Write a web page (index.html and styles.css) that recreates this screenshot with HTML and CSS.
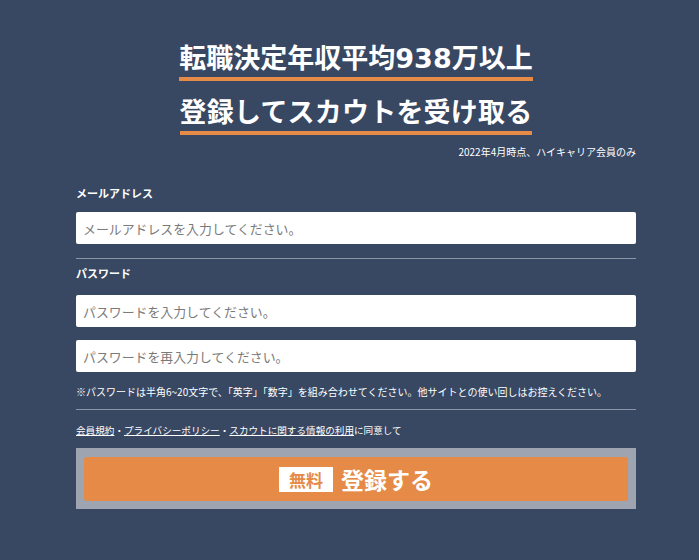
FILE: index.html
```html
<!DOCTYPE html>
<html lang="ja">
<head>
<meta charset="utf-8">
<title>登録</title>
<link rel="stylesheet" href="styles.css">
</head>
<body>
<div class="wrap">
  <div class="headline">
    <span class="hl">転職決定年収平均<span class="num">938</span>万以上</span>
    <span class="hl hl-2">登録してスカウトを受け取る</span>
  </div>
  <p class="note">2022年4月時点、ハイキャリア会員のみ</p>
  <form class="form">
    <label class="label label-mail">メールアドレス</label>
    <input class="field field-mail" type="text" placeholder="メールアドレスを入力してください。">
    <div class="sep sep-1"></div>
    <label class="label label-pass">パスワード</label>
    <input class="field field-pass" type="password" placeholder="パスワードを入力してください。">
    <input class="field field-pass2" type="password" placeholder="パスワードを再入力してください。">
    <p class="hint">※パスワードは半角6~20文字で、「英字」「数字」を組み合わせてください。他サイトとの使い回しはお控えください。</p>
    <div class="sep sep-2"></div>
    <p class="agree"><a href="#">会員規約</a>・<a href="#">プライバシーポリシー</a>・<a href="#">スカウトに関する情報の利用</a>に同意して</p>
    <div class="btn-frame">
      <button class="btn" type="button"><span class="badge">無料</span><span class="btn-text">登録する</span></button>
    </div>
  </form>
</div>
</body>
</html>
```
FILE: styles.css
```css
html, body {
  margin: 0;
  padding: 0;
  background: #384762;
  height: 100%;
}
body {
  font-family: "Noto Sans CJK JP", "Noto Sans", sans-serif;
  color: #ffffff;
}
.wrap {
  width: 560px;
  margin-left: 76px;
  padding-top: 39px;
}
.headline {
  display: flex;
  flex-direction: column;
  align-items: center;
  gap: 12px;
}
.hl {
  font-size: 27px;
  font-weight: 700;
  line-height: 36px;
  height: 36px;
  padding-bottom: 2px;
  border-bottom: 4px solid #e68a47;
  white-space: nowrap;
}
.hl-2 {
  letter-spacing: 0.2px;
}
.num {
  font-family: "DejaVu Sans", "Noto Sans CJK JP", sans-serif;
  font-weight: 700;
  line-height: 0;
}
.note {
  margin: 10px 0 0;
  font-size: 10px;
  line-height: 14px;
  text-align: right;
}
.form {
  display: flex;
  flex-direction: column;
  margin: 0;
}
.label {
  font-size: 11px;
  font-weight: 700;
  line-height: 16px;
}
.label-mail { margin-top: 26px; }
.label-pass { margin-top: 6px; }
.field {
  box-sizing: border-box;
  width: 100%;
  height: 32px;
  border: none;
  border-radius: 2px;
  background: #ffffff;
  padding: 0 7px;
  font-family: "Noto Sans CJK JP", "Noto Sans", sans-serif;
  font-size: 12.9px;
  color: #333;
  outline: none;
}
.field::placeholder { color: #7a7a7a; }
.field-mail { margin-top: 11px; }
.field-pass { margin-top: 14px; }
.field-pass2 { margin-top: 13px; }
.sep {
  height: 1px;
  background: #8c95a6;
}
.sep-1 { margin-top: 14px; }
.sep-2 { margin-top: 10px; }
.hint {
  margin: 13px 0 0;
  font-size: 10px;
  line-height: 14px;
  white-space: nowrap;
}
.agree {
  margin: 13px 0 0;
  font-size: 9.6px;
  line-height: 14px;
}
.agree a {
  color: #ffffff;
  text-decoration: underline;
}
.btn-frame {
  margin-top: 11px;
  background: #9ea5b1;
  padding: 9px 8px 8px;
}
.btn {
  width: 100%;
  height: 44px;
  border: none;
  border-radius: 3px;
  background: #e68a47;
  display: flex;
  align-items: center;
  justify-content: center;
  gap: 8px;
  padding: 0;
  font-family: "Noto Sans CJK JP", "Noto Sans", sans-serif;
  color: #ffffff;
  cursor: pointer;
}
.badge {
  background: #ffffff;
  color: #e68a47;
  font-size: 17px;
  font-weight: 700;
  line-height: 25px;
  height: 25px;
  padding: 0 10px;
}
.btn-text {
  font-size: 23px;
  font-weight: 700;
  line-height: 30px;
}
```
